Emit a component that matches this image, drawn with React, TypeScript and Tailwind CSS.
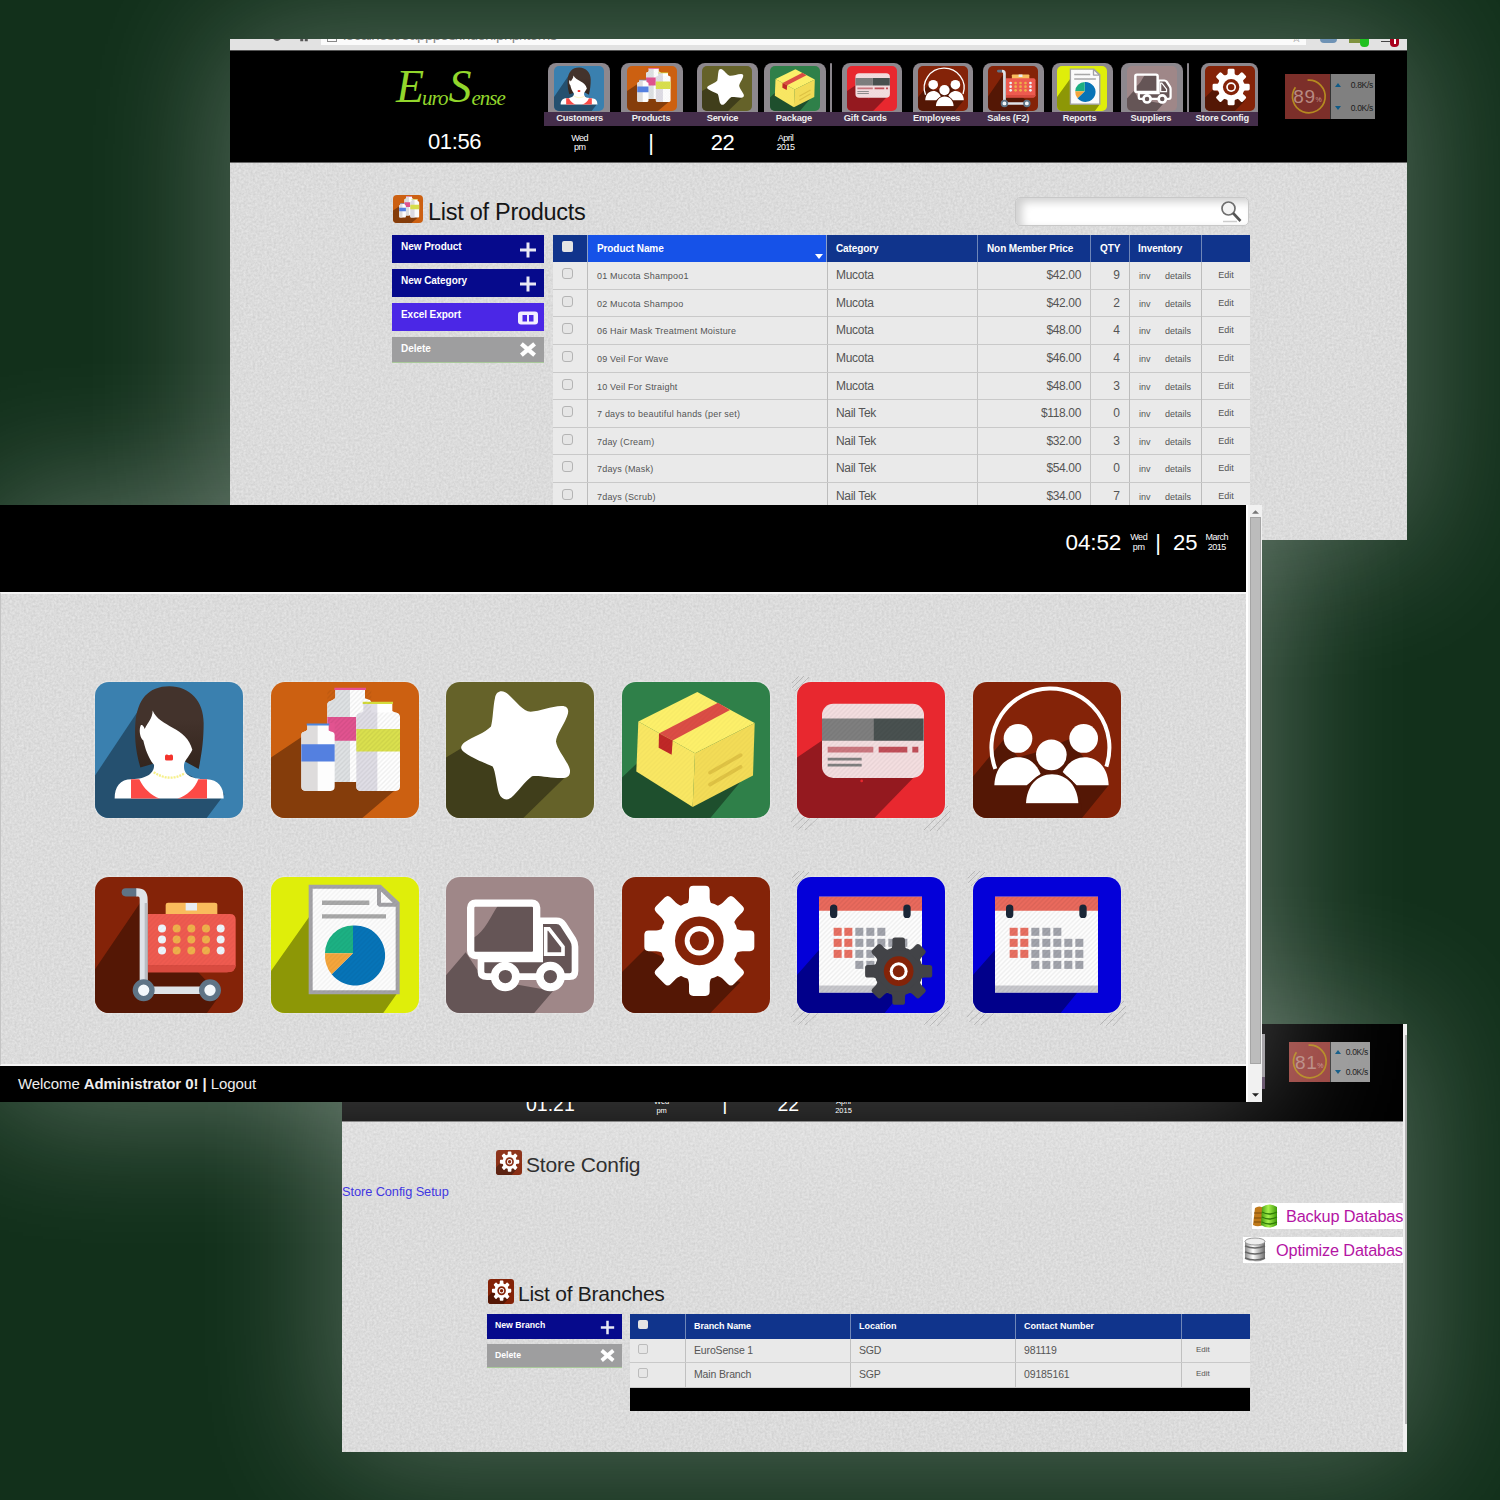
import React from "react";

/* ---------- shared helpers ---------- */

function Texture() {
  return (
    <svg className="absolute inset-0 h-full w-full" aria-hidden="true">
      <rect width="100%" height="100%" filter="url(#paper)" />
    </svg>
  );
}

function SharedDefs() {
  return (
    <svg className="absolute h-0 w-0" aria-hidden="true">
      <defs>
        <filter id="paper" x="0" y="0" width="100%" height="100%" colorInterpolationFilters="sRGB">
          <feTurbulence type="fractalNoise" baseFrequency="0.43" numOctaves={2} seed={4} />
          <feColorMatrix values="0.12 0 0 0 0.8  0.12 0 0 0 0.8  0.12 0 0 0 0.8  0 0 0 0 1" />
        </filter>
        <pattern id="hatch" width="14" height="14" patternUnits="userSpaceOnUse">
          <path d="M-2 16L16 -2M-9 9L9 -9M5 23L23 5" stroke="#000" strokeOpacity="0.11" strokeWidth="4" />
        </pattern>
        <linearGradient id="green-db" x1="0" x2="1">
          <stop offset="0" stopColor="#3f9a0c" />
          <stop offset="0.45" stopColor="#a6f04a" />
          <stop offset="1" stopColor="#3c9a08" />
        </linearGradient>
        <linearGradient id="grey-db" x1="0" x2="1">
          <stop offset="0" stopColor="#8a8a8a" />
          <stop offset="0.4" stopColor="#ffffff" />
          <stop offset="1" stopColor="#6d6d6d" />
        </linearGradient>
        <linearGradient id="hair" x1="0" y1="0" x2="0" y2="1">
          <stop offset="0.4" stopColor="#43332c" />
          <stop offset="1" stopColor="#33241c" />
        </linearGradient>
      </defs>
    </svg>
  );
}

function Gear({ cx, cy, s = 1, fill }: { cx: number; cy: number; s?: number; fill: string }) {
  return (
    <g transform={`translate(${cx} ${cy}) scale(${s})`}>
      <circle r="119" fill={fill} />
      {[0, 45, 90, 135, 180, 225, 270, 315].map((a) => (
        <path
          key={a}
          transform={`rotate(${a})`}
          fill={fill}
          d="M-42 -100C-34 -112 -31 -122 -31 -130V-152Q-31 -165 -18 -165H18Q31 -165 31 -152V-130C31 -122 34 -112 42 -100Z"
        />
      ))}
      <circle r="73" fill="#842308" />
      <circle r="44" fill="#fff" />
      <circle r="29" fill="#842308" />
    </g>
  );
}

/* ---------- tile icons ---------- */

function Customers() {
  return (
    <svg viewBox="45 37 444 407" preserveAspectRatio="none" className="h-full w-full">
      <rect x="40" y="30" width="460" height="420" fill="#3a80af" />
      <path d="M45 317L175 122L300 300L434 372L380 444H45Z" fill="#25506f" />
      <path d="M268 50C205 50 172 90 166 160C162 220 172 260 181 293L225 280L315 275L356 297C366 250 371 210 371 160C371 95 330 50 268 50Z" fill="url(#hair)" />
      <path d="M218 122C238 172 322 172 337 240C325 265 310 275 312 290C312 310 325 328 380 328C415 330 431 350 431 386H104C104 350 120 328 155 328C205 328 224 305 222 285C205 265 195 235 190 212C180 205 176 180 182 167C186 163 192 170 194 178C204 155 217 148 218 122Z" fill="#fff" />
      <path d="M153 328H178C190 355 215 378 240 386H153Z" fill="#fc4a46" />
      <path d="M381 328H355C345 355 320 378 292 386H381Z" fill="#fc4a46" />
      <path d="M255 260Q255 253 261 254L267 256L273 254Q279 253 279 260V268Q279 272 274 272H260Q255 272 255 268Z" fill="#f3332c" />
      <path d="M221 307Q268 338 315 310" fill="none" stroke="#f6f08a" strokeWidth="7" strokeDasharray="6 3" />
    </svg>
  );
}

function Products() {
  return (
    <svg viewBox="571 37 444 407" preserveAspectRatio="none" className="h-full w-full">
      <rect x="560" y="30" width="460" height="420" fill="#cc6011" />
      <path d="M571 263L665 200L830 336L940 363L845 444H571Z" fill="#853d0b" />
      <path d="M764 58H853V86C862 90 872 90 872 100V336H740V105C740 90 757 96 764 84Z" fill="#fff" />
      <path d="M764 58H808V336H740V105C740 90 757 96 764 84Z" fill="#dfe2e4" />
      <path d="M761 54H856V61H761Z" fill="#e8508f" />
      <path d="M740 142H828V213H740Z" fill="#e25390" />
      <path d="M848 100H935V124C945 130 958 128 958 142V350Q958 363 945 363H840Q827 363 827 350V142C827 128 842 132 848 124Z" fill="#fff" />
      <path d="M848 100H890V363H840Q827 363 827 350V142C827 128 842 132 848 124Z" fill="#e0dee6" />
      <path d="M846 96H937V103H846Z" fill="#d4dc3c" />
      <path d="M827 178H958V245H827Z" fill="#dbe14e" />
      <path d="M680 165H744V182C752 188 762 184 762 196V350Q762 363 750 363H675Q662 363 662 350V196C662 184 674 188 680 180Z" fill="#fdfdfd" />
      <path d="M680 165H711V363H675Q662 363 662 350V196C662 184 674 188 680 180Z" fill="#dedcdc" />
      <path d="M678 161H746V167H678Z" fill="#4d86dd" />
      <path d="M662 223H762V275H662Z" fill="#5480e0" />
      <path d="M740 61H872V128H958V363H827V336H762V160H740Z" fill="url(#hatch)" opacity="0.6" />
    </svg>
  );
}

function Service() {
  return (
    <svg viewBox="49 37 444 407" preserveAspectRatio="none" className="h-full w-full">
      <rect x="40" y="30" width="460" height="420" fill="#656229" />
      <path d="M49 263L95 235L240 270L410 318L281 444H49Z" fill="#403e1b" />
      <path d="M196 85C200 60 222 60 237 75C260 95 280 125 303 126C330 125 365 110 395 109C415 108 420 122 412 140C400 170 380 195 379 215C382 240 415 275 421 300C423 320 410 325 395 324C360 324 325 315 307 319C285 335 265 365 245 383C230 394 215 388 208 370C200 345 198 305 189 290C170 280 135 270 105 248C90 238 92 227 105 217C130 200 165 190 184 170C190 150 190 110 196 85Z" fill="#fff" />
    </svg>
  );
}

function Package() {
  return (
    <svg viewBox="575 37 444 407" preserveAspectRatio="none" className="h-full w-full">
      <rect x="570" y="30" width="460" height="420" fill="#2f8049" />
      <path d="M575 323L620 280L790 400L935 330L840 444H575Z" fill="#1e4f2d" />
      <path d="M801 67L973 160L794 250L624 155Z" fill="#fdf06a" />
      <path d="M624 155L794 250L787 411L618 305Z" fill="#f9e763" />
      <path d="M973 160L794 250L787 411L968 317Z" fill="#f3dc57" />
      <path d="M863 99L899 121L727 212L687 190Z" fill="#db4d45" />
      <path d="M686 190L727 212L724 255L685 234Z" fill="#c02827" />
      <path d="M839 308L931 256M839 344L931 291" stroke="#dfc344" strokeWidth="11" strokeLinecap="round" />
      <path d="M801 67L973 160L968 317L787 411L618 305L624 155Z" fill="url(#hatch)" opacity="0.22" />
    </svg>
  );
}

function GiftCards() {
  return (
    <svg viewBox="52 37 444 407" preserveAspectRatio="none" className="h-full w-full">
      <rect x="40" y="30" width="460" height="420" fill="#e8282f" />
      <path d="M52 263L135 207L402 323L284 444H52Z" fill="#94191f" />
      <rect x="127" y="102" width="306" height="222" rx="34" fill="#f4dee0" />
      <path d="M127 146H281V213H127Z" fill="#7f7f7f" />
      <path d="M281 146H432V213H281Z" fill="#495150" />
      <path d="M144 231H281V248H144Z" fill="#cc7880" />
      <path d="M297 231H383V248H297ZM398 231H416V248H398Z" fill="#c24f59" />
      <path d="M144 268H246M144 286H246" stroke="#808080" strokeWidth="8" />
      <rect x="127" y="102" width="306" height="222" rx="34" fill="url(#hatch)" opacity="0.45" />
      <circle cx="246" cy="333" r="4" fill="#e8282f" />
    </svg>
  );
}

function Employees() {
  return (
    <svg viewBox="579 37 444 407" preserveAspectRatio="none" className="h-full w-full">
      <rect x="570" y="30" width="460" height="420" fill="#842308" />
      <path d="M579 320L672 208L714 262L760 250L868 208L911 262L986 346L906 444H579Z" fill="#541705" />
      <path d="M646 297A177 177 0 1 1 979 290" fill="none" stroke="#fff" strokeWidth="12" />
      <circle cx="714" cy="206" r="43" fill="#fff" />
      <circle cx="911" cy="206" r="43" fill="#fff" />
      <path d="M643 346C645 295 675 262 714 262C750 262 770 285 782 312L740 346Z" fill="#fff" />
      <path d="M986 346C984 295 955 262 914 262C880 262 860 285 848 306L890 346Z" fill="#fff" />
      <path d="M738 400C740 350 770 313 816 313C862 313 893 350 895 400Z" fill="#fff" stroke="#541705" strokeWidth="14" paintOrder="stroke" />
      <path d="M725 401H905V420H725Z" fill="#541705" />
      <circle cx="814" cy="255" r="46" fill="#fff" />
    </svg>
  );
}

function Sales() {
  return (
    <svg viewBox="45 622 444 407" preserveAspectRatio="none" className="h-full w-full">
      <rect x="40" y="610" width="460" height="430" fill="#842308" />
      <path d="M45 898L180 700L300 850L420 975L380 1030H45Z" fill="#541705" />
      <path d="M257 740V706Q257 699 264 699H404Q412 699 412 706V740Z" fill="#f9bb5c" />
      <path d="M317 700H351V722H317Z" fill="#e8eef4" />
      <path d="M204 733H450Q467 733 467 750V886Q467 907 440 907H204Z" fill="#ef5b50" />
      <path d="M204 885H467Q467 907 440 907H204Z" fill="#d94b40" />
      {[776, 809, 842].map((y) =>
        [246, 290, 334, 378, 422].map((x, i) => (
          <circle key={`${x}-${y}`} cx={x} cy={y} r="12" fill={i === 0 || i === 4 ? "#edf6fc" : "#efb04b"} />
        ))
      )}
      <path d="M204 733H462V890H204Z" fill="url(#hatch)" opacity="0.3" />
      <path d="M168 668H172Q191 668 191 690V940" fill="none" stroke="#dfe3e8" strokeWidth="24" />
      <path d="M198 700V935" stroke="#b9bdc3" strokeWidth="8" />
      <path d="M169 656H137A12 12 0 0 0 137 680H169Z" fill="#5f7386" />
      <path d="M190 961H390" stroke="#dfe3e8" strokeWidth="22" />
      <circle cx="191" cy="961" r="25" fill="#f4f8fb" stroke="#5f7486" strokeWidth="16" />
      <circle cx="390" cy="961" r="25" fill="#f4f8fb" stroke="#5f7486" strokeWidth="16" />
    </svg>
  );
}

function Reports() {
  return (
    <svg viewBox="571 622 444 407" preserveAspectRatio="none" className="h-full w-full">
      <rect x="560" y="610" width="460" height="430" fill="#dfee0a" />
      <path d="M571 903L690 735L800 900L948 972L907 1030H571Z" fill="#8d9706" />
      <path d="M690 651H898L951 701V967H690Z" fill="#fdfdfd" stroke="#a3a2a6" strokeWidth="12" />
      <path d="M895 651V705H951Z" fill="#fdfdfd" stroke="#a3a2a6" strokeWidth="12" strokeLinejoin="bevel" />
      <path d="M724 699H866M724 740H916" stroke="#a9a9a9" strokeWidth="13" />
      <path d="M817 850V767A90 90 0 1 1 753 913Z" fill="#0674b8" />
      <path d="M817 850V767A84 84 0 0 0 733 850Z" fill="#1cb183" />
      <path d="M817 850H733A90 90 0 0 0 753 913Z" fill="#f5a63c" />
      <path d="M690 651H898L951 701V967H690Z" fill="url(#hatch)" opacity="0.4" />
    </svg>
  );
}

function Suppliers() {
  return (
    <svg viewBox="49 621 444 407" preserveAspectRatio="none" className="h-full w-full">
      <rect x="40" y="610" width="460" height="430" fill="#9f8788" />
      <path d="M49 915L108 846L160 925L370 962L312 1030H49Z" fill="#655556" />
      <path d="M330 752H380Q394 752 401 763L430 808Q436 818 436 830V902Q436 919 420 919H172Q154 919 154 905V866H330Z" fill="#655556" stroke="#fff" strokeWidth="20" />
      <path d="M134 710H310V845H134Z" fill="#9f8788" />
      <path d="M206 705H315V850H132V803C165 785 185 735 206 705Z" fill="#655556" />
      <rect x="123" y="699" width="198" height="157" rx="14" fill="none" stroke="#fff" strokeWidth="22" />
      <path d="M348 776H358L400 830V852H348Z" fill="#655556" stroke="#fff" strokeWidth="11" />
      <circle cx="227" cy="919" r="32" fill="#655556" stroke="#fff" strokeWidth="24" />
      <circle cx="362" cy="919" r="32" fill="#655556" stroke="#fff" strokeWidth="24" />
    </svg>
  );
}

function StoreConfig() {
  return (
    <svg viewBox="575 621 444 407" preserveAspectRatio="none" className="h-full w-full">
      <rect x="570" y="610" width="460" height="430" fill="#842308" />
      <path d="M575 905L645 836L780 900L930 935L838 1030H575Z" fill="#541705" />
      <Gear cx={807} cy={812} fill="#fff" />
    </svg>
  );
}

function Calendar({ gear = false }: { gear?: boolean }) {
  return (
    <svg viewBox="52 622 444 407" preserveAspectRatio="none" className="h-full w-full">
      <rect x="40" y="610" width="470" height="430" fill="#0400d9" />
      <path d="M52 915L120 838L300 940L365 968L314 1030H52Z" fill="#01008b" />
      <path d="M118 681H427V968H118Z" fill="#fefefe" />
      <path d="M118 681H427V723H118Z" fill="#ea6a5d" />
      <path d="M118 947H427V968H118Z" fill="#c9c9ce" />
      <path d="M162 715V734M382 715V734" stroke="#1b2738" strokeWidth="22" strokeLinecap="round" />
      {[786, 819, 852, 885].map((y, r) =>
        [174, 206, 239, 272, 305, 338, 371].map((x, c) => {
          if ((r === 0 && c > 4) || (r === 3 && c < 2)) return null;
          return <rect key={`${x}-${y}`} x={x - 12} y={y - 12} width="24" height="24" fill={c < 2 ? "#ea7163" : "#a3a5ad"} />;
        })
      )}
      <path d="M118 681H427V968H118Z" fill="url(#hatch)" opacity="0.6" />
      {gear && <Gear cx={357} cy={904} s={0.61} fill="#424347" />}
    </svg>
  );
}

const CalendarConfig = () => <Calendar gear />;
const CalendarPlain = () => <Calendar />;

/* ---------- small pieces ---------- */

function NetWidget({ value, up, down, tone, panel, opts }: { value: string; up: string; down: string; tone: string; panel: string; opts: string }) {
  return (
    <div className={`flex shrink-0 ${opts}`}>
      <div className={`flex w-1/2 items-center justify-center ${tone}`}>
        <svg viewBox="0 0 45 45" className="absolute h-[42px] w-[42px]">
          <path d="M9 12A17.500 17.500 0 1 0 22 4.500" fill="none" stroke="#b58a20" strokeWidth="1.800" />
        </svg>
        <span className="text-[19px] leading-none tracking-[0.500px] text-[#b88a82]">{value}</span>
        <span className="mt-1.5 text-[7px] leading-none text-[#c89a90]">%</span>
      </div>
      <div className={`flex w-1/2 flex-col justify-around border-l border-black/60 pl-1 pr-0.5 ${panel}`}>
        <div className="flex items-center justify-between">
          <svg viewBox="0 0 6 4" className="h-1 w-1.5"><path d="M0 4L3 0L6 4Z" fill="#0f5a86" /></svg>
          <span className="text-[8.500px] leading-none tracking-[-0.300px] text-[#1c1c1c]">{up}</span>
        </div>
        <div className="flex items-center justify-between">
          <svg viewBox="0 0 6 4" className="h-1 w-1.5"><path d="M0 0L3 4L6 0Z" fill="#0f5a86" /></svg>
          <span className="text-[8.500px] leading-none tracking-[-0.300px] text-[#1c1c1c]">{down}</span>
        </div>
      </div>
    </div>
  );
}

function PlusIcon() {
  return (
    <svg viewBox="0 0 18 18" className="h-[18px] w-[18px]">
      <path d="M9 1.500V16.500M1 9H17" stroke="#e8e8f4" strokeWidth="3" />
    </svg>
  );
}
function CrossIcon() {
  return (
    <svg viewBox="0 0 18 18" className="h-[17px] w-[18px]">
      <path d="M2 3L16 15M16 3L2 15" stroke="#fff" strokeWidth="4.500" />
    </svg>
  );
}
function ExcelIcon() {
  return (
    <svg viewBox="0 0 20 14" className="h-[14px] w-[20px]">
      <rect width="20" height="13" y="0.500" rx="3" fill="#f2eeff" />
      <path d="M4.500 4H9V10.500H4.500ZM11 4H15.500V10.500H11Z" fill="#4b27e6" />
    </svg>
  );
}

const Check = () => <span className="block h-[11px] w-[11px] rounded-[3px] border border-[#b4b4b4] bg-[#e6e6e6]" />;

/* ---------- products window ---------- */

const NAV = [
  { label: "Customers", Icon: Customers, tab: "ml-[4px] w-[62px]", bar: false },
  { label: "Products", Icon: Products, tab: "ml-[11px] w-[62px]", bar: false },
  { label: "Service", Icon: Service, tab: "ml-[14px] w-[62px]", bar: false },
  { label: "Package", Icon: Package, tab: "ml-[6px] w-[62px]", bar: false },
  { label: "Gift Cards", Icon: GiftCards, tab: "ml-[10px] w-[60px]", bar: true },
  { label: "Employees", Icon: Employees, tab: "ml-[11px] w-[60px]", bar: false },
  { label: "Sales (F2)", Icon: Sales, tab: "ml-[10px] w-[61px]", bar: false },
  { label: "Reports", Icon: Reports, tab: "ml-[8px] w-[62px]", bar: false },
  { label: "Suppliers", Icon: Suppliers, tab: "ml-[8px] w-[62px]", bar: false },
  { label: "Store Config", Icon: StoreConfig, tab: "ml-[12px] w-[57px]", bar: true },
];

const ROWS = [
  ["01 Mucota Shampoo1", "Mucota", "$42.00", "9"],
  ["02 Mucota Shampoo", "Mucota", "$42.00", "2"],
  ["06 Hair Mask Treatment Moisture", "Mucota", "$48.00", "4"],
  ["09 Veil For Wave", "Mucota", "$46.00", "4"],
  ["10 Veil For Straight", "Mucota", "$48.00", "3"],
  ["7 days to beautiful hands (per set)", "Nail Tek", "$118.00", "0"],
  ["7day (Cream)", "Nail Tek", "$32.00", "3"],
  ["7days (Mask)", "Nail Tek", "$54.00", "0"],
  ["7days (Scrub)", "Nail Tek", "$34.00", "7"],
];

const P_COLS = "grid grid-cols-[34px_240px_150px_113px_39px_72px_49px]";

function ProductsWindow() {
  return (
    <section className="absolute left-[230px] top-[39px] flex h-[501px] w-[1177px] flex-col overflow-hidden bg-[#dcdcdc]">
      <div className="flex h-[12px] shrink-0 items-start justify-between border-b border-[#555] bg-[#e2e2e2] pl-[42px]">
        <div className="flex gap-[17px]">
          <svg viewBox="0 0 10 4" className="h-[3px] w-[10px]"><path d="M0 0Q5 5 10 0Z" fill="#555" /></svg>
          <svg viewBox="0 0 10 4" className="h-[3px] w-[10px]"><path d="M0 0H4V3H0ZM6 0H10V3H6Z" fill="#555" /></svg>
        </div>
        <div className="ml-[12px] flex h-[6px] flex-1 items-start overflow-hidden bg-[#fbfbfb] pl-1.5">
          <span className="h-[3px] w-[10px] border border-t-0 border-[#888]" />
          <span className="-mt-[12px] ml-1.5 text-[15px] leading-[15px] tracking-[-0.500px] text-[#8a8a8a]">localhost/eapppos/index.php/items</span>
          <span className="-mt-[7px] ml-auto mr-1 text-[12px] leading-none text-[#777]">☆</span>
        </div>
        <div className="flex w-[101px] gap-[12px] pl-[14px]">
          <span className="h-[4px] w-[17px] rounded-b bg-[#6f93b5]" />
          <span className="flex w-[20px]"><i className="h-[4px] w-[12px] bg-[#7f9340]" /><i className="h-[8px] w-[9px] rounded-b bg-[#20c020]" /></span>
          <span className="flex w-[20px]"><i className="h-[3px] w-[9px] border-b border-[#444]" /><i className="flex h-[8px] w-[9px] justify-center rounded-b bg-[#a8001c]"><b className="h-[5px] w-[2px] bg-white" /></i></span>
        </div>
      </div>

      <header className="flex h-[112px] shrink-0 border-b border-[#666] bg-black">
        <div className="flex w-[314px] flex-col pl-[164px]">
          <div className="mt-[12px] flex h-[46px] items-end pl-[2px] font-['Liberation_Serif',serif] italic leading-none text-[#92d62c]">
            <span className="text-[46px] leading-[44px] tracking-[-2px]">E</span>
            <span className="text-[21px] tracking-[-1px]">uro</span>
            <span className="ml-[1px] text-[46px] leading-[44px]">S</span>
            <span className="text-[21px] tracking-[-1px]">ense</span>
          </div>
          <span className="mt-[21px] pl-[34px] text-[22px] leading-[24px] tracking-[-0.400px] text-white">01:56</span>
        </div>
        <div className="flex w-[714px] flex-col pt-[12px]">
          <div className="flex h-[49px]">
            {NAV.map(({ label, Icon, tab, bar }) => (
              <React.Fragment key={label}>
                {bar && <span className="ml-[4px] h-full w-[2px] rounded-t bg-[#8b868c]" />}
                <div className={`flex items-end justify-center rounded-t-[8px] bg-[#8d888e] pb-px ${tab}`}>
                  <div className="h-[45px] w-[50px] overflow-hidden rounded-[5px]"><Icon /></div>
                </div>
              </React.Fragment>
            ))}
          </div>
          <div className="grid h-[14px] grid-cols-10 items-center bg-[#452e4b]">
            {NAV.map(({ label }) => (
              <span key={label} className="whitespace-nowrap text-center text-[9.300px] font-bold leading-none tracking-[-0.200px] text-[#eee]">{label}</span>
            ))}
          </div>
          <div className="grid h-[33px] grid-cols-10 items-center text-center text-white">
            <span className="text-[9px] leading-[9px] tracking-[-0.500px]">Wed<br />pm</span>
            <span className="pt-px text-[22px] leading-none">|</span>
            <span className="text-[22px] leading-none tracking-[-0.500px]">22</span>
            <span className="pr-[17px] text-[9px] leading-[9px] tracking-[-0.500px]">April<br />2015</span>
          </div>
        </div>
        <NetWidget value="89" up="0.8K/s" down="0.0K/s" tone="bg-[#7c2f2a]" panel="bg-[#808080]" opts="ml-[27px] mt-[23px] h-[45px] w-[90px]" />
      </header>

      <div className="relative flex-1">
        <Texture />
        <div className="relative flex flex-col pl-[162px] pt-[30px]">
          <div className="flex h-[42px] w-[858px] justify-between">
            <div className="flex">
              <div className="ml-px mt-[2px] h-[28px] w-[30px] overflow-hidden rounded-[4px]"><Products /></div>
              <h1 className="ml-[5px] mt-[5px] text-[23.500px] leading-[28px] tracking-[-0.280px] text-[#151515]">List of Products</h1>
            </div>
            <div className="mr-[1px] mt-[4px] flex h-[29px] w-[234px] items-center justify-end rounded-[5px] border border-[#c8c8c8] bg-white pr-[6px] shadow-[inset_6px_4px_8px_#d0d0d0]">
              <svg viewBox="0 0 22 22" className="h-[22px] w-[22px]">
                <path d="M3 20.500H17" stroke="#ccc" strokeWidth="1.500" />
                <circle cx="8.500" cy="7.500" r="6.500" fill="#f4f4f4" stroke="#6e6e6e" strokeWidth="1.700" />
                <path d="M13 12L20.500 20" stroke="#555" strokeWidth="2.600" />
              </svg>
            </div>
          </div>

          <div className="flex">
            <div className="flex w-[161px] flex-col gap-[6px] text-[10px] font-bold text-white">
              {[
                { t: "New Product", c: "bg-[#060a8c]", I: PlusIcon },
                { t: "New Category", c: "bg-[#060a8c]", I: PlusIcon },
                { t: "Excel Export", c: "bg-[#4b27e6]", I: ExcelIcon },
                { t: "Delete", c: "bg-[#9e9e9f] border-b border-[#a9c99a]", I: CrossIcon },
              ].map(({ t, c, I }) => (
                <div key={t} className={`flex w-[152px] justify-between pl-[9px] ${t === "Excel Export" ? "pr-[6px]" : "pr-[7px]"} ${t === "Delete" ? "h-[26px]" : "h-[28px]"} ${c}`}>
                  <span className="pt-[5px] leading-[14px] tracking-[-0.050px]">{t}</span>
                  <span className={`flex items-center ${t === "Delete" ? "" : "pt-px"}`}><I /></span>
                </div>
              ))}
            </div>

            <div className="w-[697px]">
              <div className={`${P_COLS} h-[27px] bg-[#10348c] text-[10px] font-bold leading-[27px] tracking-[-0.100px] text-white`}>
                <span className="flex justify-start pl-[9px] pt-[6px]"><i className="h-[11px] w-[11px] rounded-[2px] bg-[#e4e4e4]" /></span>
                <span className="flex justify-between border-x border-[#8ca0c8] bg-[#1652e8] pl-[9px] pr-[3px]">
                  Product Name
                  <svg viewBox="0 0 8 5" className="mt-[19px] h-[5px] w-[8px]"><path d="M0 0H8L4 5Z" fill="#fff" /></svg>
                </span>
                <span className="pl-[9px]">Category</span>
                <span className="border-l border-[#6f86b8] pl-[9px]">Non Member Price</span>
                <span className="border-l border-[#6f86b8] pl-[9px]">QTY</span>
                <span className="border-l border-[#6f86b8] pl-[8px]">Inventory</span>
                <span className="border-l border-[#6f86b8]" />
              </div>
              {ROWS.map((r) => (
                <div key={r[0]} className={`${P_COLS} h-[27.650px] border-b border-[#c9c9c9] bg-[#eaeaea] text-[12px] leading-[26px] text-[#555]`}>
                  <span className="pl-[9px] pt-[6px]"><Check /></span>
                  <span className="border-l border-[#bcbcbc] pl-[9px] pt-px text-[9px] tracking-[0.200px]">{r[0]}</span>
                  <span className="border-l border-[#bcbcbc] pl-[8px] tracking-[-0.300px]">{r[1]}</span>
                  <span className="border-l border-[#c4c4c4] pr-[9px] text-right tracking-[-0.350px]">{r[2]}</span>
                  <span className="border-l border-[#c4c4c4] pr-[9px] text-right">{r[3]}</span>
                  <span className="flex justify-between border-l border-[#bcbcbc] pl-[9px] pr-[10px] pt-px text-[9px]"><i className="not-italic">inv</i><i className="not-italic">details</i></span>
                  <span className="border-l border-[#bcbcbc] text-center text-[9px]">Edit</span>
                </div>
              ))}
            </div>
          </div>
        </div>
      </div>
    </section>
  );
}

/* ---------- dashboard window ---------- */

const TILES = [
  { id: "customers", Icon: Customers, hatch: false },
  { id: "products", Icon: Products, hatch: false },
  { id: "service", Icon: Service, hatch: false },
  { id: "package", Icon: Package, hatch: false },
  { id: "gift", Icon: GiftCards, hatch: true },
  { id: "employees", Icon: Employees, hatch: false },
  { id: "sales", Icon: Sales, hatch: false },
  { id: "reports", Icon: Reports, hatch: false },
  { id: "suppliers", Icon: Suppliers, hatch: false },
  { id: "store", Icon: StoreConfig, hatch: false },
  { id: "calendar-config", Icon: CalendarConfig, hatch: true },
  { id: "calendar", Icon: CalendarPlain, hatch: true },
];

function CornerHatch() {
  return (
    <svg viewBox="0 0 160 160" className="absolute -left-[6px] -top-[8px] h-[160px] w-[160px]">
      <g stroke="#000" strokeOpacity="0.15" strokeWidth="1">
        <path d="M0 148L12 135M2 153L20 137M7 156L24 139M14 156L27 144" />
        <path d="M133 156L157 132M139 157L159 137M146 157L159 143" />
        <path d="M1 14L13 2M1 9L8 2M4 17L18 3" />
      </g>
    </svg>
  );
}

function DashboardWindow() {
  return (
    <section className="absolute left-0 top-[505px] flex h-[597px] w-[1262px]">
      <div className="flex w-[1246px] flex-col">
        <header className="flex h-[87px] items-start justify-end bg-black pr-[18px] pt-[26px] text-white">
          <span className="text-[22.500px] leading-[24px] tracking-[-0.150px]">04:52</span>
          <span className="ml-[9px] mt-[2px] text-center text-[9px] leading-[9.500px] tracking-[-0.400px]">Wed<br />pm</span>
          <span className="ml-[8px] text-[22px] leading-[24px]">|</span>
          <span className="ml-[12px] text-[22px] leading-[24px]">25</span>
          <span className="ml-[8px] mt-[2px] text-center text-[9px] leading-[9.500px] tracking-[-0.500px]">March<br />2015</span>
        </header>
        <main className="relative h-[474px] border-y-2 border-l border-[#f4f4f4] border-l-[#c4c4c4]">
          <Texture />
          <div className="relative grid w-max grid-cols-6 gap-x-[27.500px] gap-y-[59px] pl-[94px] pt-[88px]">
            {TILES.map(({ id, Icon, hatch }) => (
              <div key={id} className="relative h-[136px] w-[148px]">
                {hatch && <CornerHatch />}
                <div className="relative h-full w-full overflow-hidden rounded-[14px] shadow-[0_0_2px_#f8f8f8]"><Icon /></div>
              </div>
            ))}
          </div>
        </main>
        <footer className="flex-1 bg-black pl-[18px] text-[15px] leading-[36px] tracking-[-0.080px] text-[#eee]">
          Welcome <b>Administrator 0! |</b> Logout
        </footer>
      </div>
      <div className="flex w-[16px] flex-col items-center justify-between border-l-2 border-white bg-[#f1f1f1] py-[5px]">
        <svg viewBox="0 0 8 4" className="h-[4px] w-[7px] shrink-0"><path d="M0 4L4 0L8 4Z" fill="#777" /></svg>
        <span className="mb-[29px] mt-[3px] w-[11px] flex-1 border border-[#a5a5a5] bg-[#bcbcbc]" />
        <svg viewBox="0 0 8 4" className="h-[4px] w-[7px] shrink-0"><path d="M0 0L4 4L8 0Z" fill="#222" /></svg>
      </div>
    </section>
  );
}

/* ---------- store config window ---------- */

function StoreWindow() {
  return (
    <section className="absolute left-[342px] top-[1024px] flex h-[428px] w-[1065px] bg-[#f0f0f0]">
      <div className="flex w-[1061px] flex-col overflow-hidden">
        <header className="flex h-[98px] shrink-0 border-b border-[#777] bg-black text-white">
          <div className="flex w-[920px] pl-[184px] pt-[69px]">
            <span className="w-[50px] text-[19.500px] leading-[22px]">01:21</span>
            <span className="ml-[78px] mt-[4px] text-center text-[7.500px] leading-[9px]">Wed<br />pm</span>
            <span className="ml-[53px] text-[20px] leading-[20px]">|</span>
            <span className="ml-[50px] text-[19.500px] leading-[22px]">22</span>
            <span className="ml-[36px] mt-[4px] text-center text-[7.500px] leading-[9px]">April<br />2015</span>
          </div>
          <div className="mt-[10px] flex h-[55px] w-[3px] flex-col bg-[#9a979c]"><i className="mt-auto h-[12px] bg-[#5a4660]" /></div>
          <NetWidget value="81" up="0.0K/s" down="0.0K/s" tone="bg-[#9a4540]" panel="bg-[#9a9a9a]" opts="ml-[24px] mt-[18px] h-[40px] w-[81px]" />
        </header>
        <div className="relative flex-1">
          <Texture />
          <div className="relative flex flex-col">
            <div className="flex h-[42px] pl-[154px] pt-[28px]">
              <div className="h-[25px] w-[26px] shrink-0 overflow-hidden rounded-[3px]"><StoreConfig /></div>
              <h2 className="ml-[4px] mt-[1px] text-[21px] leading-[28px] tracking-[-0.200px] text-[#222]">Store Config</h2>
            </div>
            <a className="mt-[20px] text-[12.800px] leading-[16px] tracking-[-0.080px] text-[#3a30e0]">Store Config Setup</a>
            <div className="mt-[3px] flex flex-col items-end gap-[8px] whitespace-nowrap text-[16.300px] leading-[26px] tracking-[-0.160px] text-[#b414a4]">
              <div className="flex w-[151px] bg-white">
                <svg viewBox="0 0 26 26" className="mr-[8px] h-[26px] w-[26px] shrink-0">
                  <path d="M3 5Q7 2 12 5V21Q7 25 1 22Z" fill="#c07818" />
                  <path d="M2 10H12M2 15H12M2 19H12" stroke="#7a4a08" />
                  <path d="M10 4Q17 -1 25 4L25 22Q17 27 9 22Z" fill="url(#green-db)" />
                  <path d="M10 9Q17 13 25 9M10 14Q17 18 25 14M10 19Q17 23 25 19" fill="none" stroke="#2f7a08" strokeWidth="1.300" />
                </svg>
                <span>Backup Databas</span>
              </div>
              <div className="flex w-[160px] bg-white">
                <svg viewBox="0 0 24 26" className="mr-[9px] h-[26px] w-[24px] shrink-0">
                  <path d="M2 4V22Q12 28 22 22V4Z" fill="url(#grey-db)" />
                  <path d="M2 9Q12 13 22 9M2 15Q12 19 22 15M2 21Q12 25 22 21" fill="none" stroke="#666" strokeWidth="1.600" />
                  <ellipse cx="12" cy="4.500" rx="10" ry="3.500" fill="#eee" stroke="#999" />
                </svg>
                <span>Optimize Databas</span>
              </div>
            </div>
            <div className="mt-[14px] flex h-[37px] pl-[146px]">
              <div className="mt-[2px] h-[25px] w-[26px] shrink-0 overflow-hidden rounded-[3px]"><StoreConfig /></div>
              <h2 className="ml-[4px] mt-[3px] text-[21px] leading-[28px] tracking-[-0.250px] text-[#1c1c1c]">List of Branches</h2>
            </div>
            <div className="flex pl-[145px]">
              <div className="flex w-[143px] flex-col gap-[5px] text-[8.700px] font-bold text-white">
                <div className="flex h-[25px] w-[135px] justify-between bg-[#060a8c] pl-[8px] pr-[7px]">
                  <span className="leading-[22px]">New Branch</span>
                  <span className="flex items-center pt-px"><svg viewBox="0 0 18 18" className="h-[15px] w-[15px]"><path d="M9 1V17M1 9H17" stroke="#e8e8f4" strokeWidth="3" /></svg></span>
                </div>
                <div className="flex h-[24px] w-[135px] justify-between border-b border-[#a9c99a] bg-[#9e9e9f] pl-[8px] pr-[7px]">
                  <span className="leading-[22px]">Delete</span>
                  <span className="flex items-center"><svg viewBox="0 0 18 18" className="h-[15px] w-[15px]"><path d="M2 3L16 15M16 3L2 15" stroke="#fff" strokeWidth="4.500" /></svg></span>
                </div>
              </div>
              <div className="w-[620px]">
                <div className="grid h-[25px] grid-cols-[55px_165px_165px_166px_69px] bg-[#10348c] text-[9px] font-bold leading-[25px] text-white">
                  <span className="pl-[8px] pt-[6px]"><i className="block h-[9px] w-[10px] rounded-[2px] bg-[#e4e4e4]" /></span>
                  <span className="border-l border-[#6f86b8] pl-[8px] tracking-[-0.100px]">Branch Name</span>
                  <span className="border-l border-[#6f86b8] pl-[8px]">Location</span>
                  <span className="border-l border-[#6f86b8] pl-[8px]">Contact Number</span>
                  <span className="border-l border-[#6f86b8]" />
                </div>
                {[["EuroSense 1", "SGD", "981119"], ["Main Branch", "SGP", "09185161"]].map((r) => (
                  <div key={r[0]} className="grid h-[24.250px] grid-cols-[55px_165px_165px_166px_69px] border-b border-[#c9c9c9] bg-[#e9e9e9] text-[10.500px] leading-[22px] tracking-[-0.150px] text-[#555]">
                    <span className="pl-[8px] pt-[5px]"><i className="block h-[10px] w-[10px] rounded-[2px] border border-[#bcbcbc] bg-[#e6e6e6]" /></span>
                    <span className="border-l border-[#c0c0c0] pl-[8px]">{r[0]}</span>
                    <span className="border-l border-[#c0c0c0] pl-[8px]">{r[1]}</span>
                    <span className="border-l border-[#c0c0c0] pl-[8px]">{r[2]}</span>
                    <span className="border-l border-[#c0c0c0] pl-[14px] text-[8px] tracking-normal">Edit</span>
                  </div>
                ))}
                <div className="h-[23px] bg-black" />
              </div>
            </div>
          </div>
        </div>
      </div>
      <div className="mb-[28px] ml-auto mt-[11px] w-[2px] bg-[#b4b4b4]" />
    </section>
  );
}

export default function App() {
  return (
    <div className="relative h-[1500px] w-[1500px] overflow-hidden bg-[#12301b] font-['Liberation_Sans',Arial,sans-serif]">
      <SharedDefs />
      <div className="absolute left-[230px] top-[39px] h-[501px] w-[1177px] shadow-[0_0_130px_10px_rgba(255,255,255,0.27)]" />
      <div className="absolute left-[342px] top-[1024px] h-[428px] w-[1065px] shadow-[0_0_130px_10px_rgba(255,255,255,0.27)]" />
      <StoreWindow />
      <div className="absolute left-0 top-[505px] h-[597px] w-[1262px] shadow-[0_0_130px_10px_rgba(255,255,255,0.3)]" />
      <ProductsWindow />
      <DashboardWindow />
    </div>
  );
}
